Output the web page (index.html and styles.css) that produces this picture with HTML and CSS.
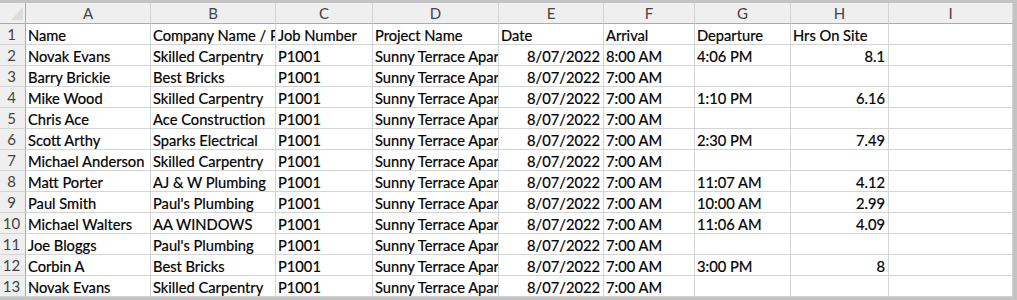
FILE: index.html
```html
<!DOCTYPE html>
<html>
<head>
<meta charset="utf-8">
<link rel="stylesheet" href="styles.css">
</head>
<body>
<div class="frame">
  <div class="sheet">
    <div class="corner"><svg width="12" height="13" viewBox="0 0 12 13"><polygon points="12,0 12,13 0,13" fill="#dcdcdc"/></svg></div>
    <div class="ch">A</div><div class="ch">B</div><div class="ch">C</div><div class="ch">D</div><div class="ch">E</div><div class="ch">F</div><div class="ch">G</div><div class="ch">H</div><div class="ch">I</div>

    <div class="rh">1</div><div class="c">Name</div><div class="c">Company Name / Phone</div><div class="c">Job Number</div><div class="c">Project Name</div><div class="c">Date</div><div class="c">Arrival</div><div class="c">Departure</div><div class="c">Hrs On Site</div><div class="c"></div>

    <div class="rh">2</div><div class="c">Novak Evans</div><div class="c">Skilled Carpentry</div><div class="c">P1001</div><div class="c">Sunny Terrace Apartments</div><div class="c r">8/07/2022</div><div class="c">8:00 AM</div><div class="c">4:06 PM</div><div class="c r">8.1</div><div class="c"></div>

    <div class="rh">3</div><div class="c">Barry Brickie</div><div class="c">Best Bricks</div><div class="c">P1001</div><div class="c">Sunny Terrace Apartments</div><div class="c r">8/07/2022</div><div class="c">7:00 AM</div><div class="c"></div><div class="c r"></div><div class="c"></div>

    <div class="rh">4</div><div class="c">Mike Wood</div><div class="c">Skilled Carpentry</div><div class="c">P1001</div><div class="c">Sunny Terrace Apartments</div><div class="c r">8/07/2022</div><div class="c">7:00 AM</div><div class="c">1:10 PM</div><div class="c r">6.16</div><div class="c"></div>

    <div class="rh">5</div><div class="c">Chris Ace</div><div class="c">Ace Construction</div><div class="c">P1001</div><div class="c">Sunny Terrace Apartments</div><div class="c r">8/07/2022</div><div class="c">7:00 AM</div><div class="c"></div><div class="c r"></div><div class="c"></div>

    <div class="rh">6</div><div class="c">Scott Arthy</div><div class="c">Sparks Electrical</div><div class="c">P1001</div><div class="c">Sunny Terrace Apartments</div><div class="c r">8/07/2022</div><div class="c">7:00 AM</div><div class="c">2:30 PM</div><div class="c r">7.49</div><div class="c"></div>

    <div class="rh">7</div><div class="c">Michael Anderson</div><div class="c">Skilled Carpentry</div><div class="c">P1001</div><div class="c">Sunny Terrace Apartments</div><div class="c r">8/07/2022</div><div class="c">7:00 AM</div><div class="c"></div><div class="c r"></div><div class="c"></div>

    <div class="rh">8</div><div class="c">Matt Porter</div><div class="c">AJ &amp; W Plumbing</div><div class="c">P1001</div><div class="c">Sunny Terrace Apartments</div><div class="c r">8/07/2022</div><div class="c">7:00 AM</div><div class="c">11:07 AM</div><div class="c r">4.12</div><div class="c"></div>

    <div class="rh">9</div><div class="c">Paul Smith</div><div class="c">Paul's Plumbing</div><div class="c">P1001</div><div class="c">Sunny Terrace Apartments</div><div class="c r">8/07/2022</div><div class="c">7:00 AM</div><div class="c">10:00 AM</div><div class="c r">2.99</div><div class="c"></div>

    <div class="rh">10</div><div class="c">Michael Walters</div><div class="c">AA WINDOWS</div><div class="c">P1001</div><div class="c">Sunny Terrace Apartments</div><div class="c r">8/07/2022</div><div class="c">7:00 AM</div><div class="c">11:06 AM</div><div class="c r">4.09</div><div class="c"></div>

    <div class="rh">11</div><div class="c">Joe Bloggs</div><div class="c">Paul's Plumbing</div><div class="c">P1001</div><div class="c">Sunny Terrace Apartments</div><div class="c r">8/07/2022</div><div class="c">7:00 AM</div><div class="c"></div><div class="c r"></div><div class="c"></div>

    <div class="rh">12</div><div class="c">Corbin A</div><div class="c">Best Bricks</div><div class="c">P1001</div><div class="c">Sunny Terrace Apartments</div><div class="c r">8/07/2022</div><div class="c">7:00 AM</div><div class="c">3:00 PM</div><div class="c r">8</div><div class="c"></div>

    <div class="rh">13</div><div class="c">Novak Evans</div><div class="c">Skilled Carpentry</div><div class="c">P1001</div><div class="c">Sunny Terrace Apartments</div><div class="c r">8/07/2022</div><div class="c">7:00 AM</div><div class="c"></div><div class="c r"></div><div class="c"></div>
  </div>
</div>
</body>
</html>
```

FILE: styles.css
```css
* { box-sizing: border-box; }
html, body { margin: 0; padding: 0; }
body {
  width: 1017px;
  height: 300px;
  overflow: hidden;
  background: #c3c3c3;
  font-family: Lato, "Open Sans", sans-serif;
}
.frame {
  width: 1017px;
  height: 300px;
  border-top: 3px solid #c3c3c3;
  border-right: 4px solid #c3c3c3;
  border-bottom: 3px solid #c3c3c3;
  background: #ffffff;
}
.sheet {
  display: grid;
  grid-template-columns: 26px 125px 125px 97px 126px 105px 91px 96px 98px 124px;
  grid-template-rows: 21px repeat(13, 21px);
}
.corner {
  background: #efefef;
  border-right: 1px solid #ababab;
  border-bottom: 1px solid #ababab;
  display: flex;
  justify-content: flex-end;
  align-items: flex-end;
  padding: 0 2px 3px 0;
}
.corner svg { display: block; }
.ch {
  background: #efefef;
  border-right: 1px solid #d4d4d4;
  border-bottom: 1px solid #ababab;
  color: #444444;
  font-size: 15px;
  line-height: 20px;
  text-align: center;
}
.ch:last-child { border-right: none; }
.rh {
  background: #efefef;
  border-right: 1px solid #ababab;
  border-bottom: 1px solid #d4d4d4;
  color: #444444;
  font-size: 15px;
  line-height: 20px;
  text-align: center;
  padding-right: 2px;
}
.c {
  border-right: 1px solid #d4d4d4;
  border-bottom: 1px solid #d4d4d4;
  color: #000000;
  font-size: 14.7px;
  line-height: 20px;
  padding: 1px 3px 0 2px;
  white-space: nowrap;
  overflow: hidden;
  -webkit-text-stroke: 0.2px #000000;
}
.c.r {
  text-align: right;
  padding-right: 3px;
}
```
